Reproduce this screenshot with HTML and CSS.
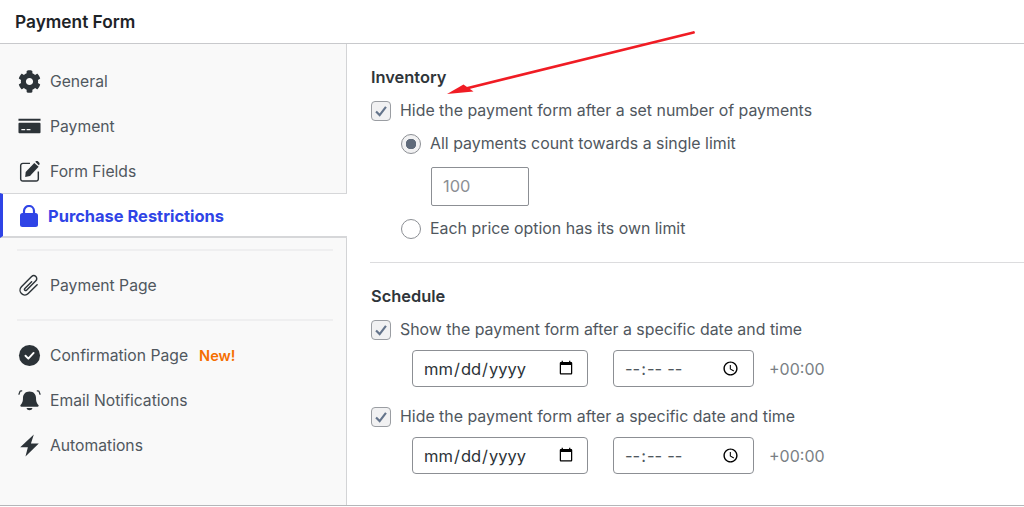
FILE: index.html
```html
<!DOCTYPE html>
<html lang="en">
<head>
<meta charset="utf-8">
<title>Payment Form</title>
<link rel="stylesheet" href="styles.css">
</head>
<body>
<header class="title">Payment Form</header>
<div class="panel">
  <nav class="side">
    <div class="group">
      <a class="item">
        <svg class="ico" viewBox="0 0 512 512"><path d="M487.4 315.7l-42.6-24.6c4.3-23.2 4.3-47 0-70.2l42.6-24.6c4.9-2.8 7.1-8.6 5.5-14-11.1-35.6-30-67.8-54.7-94.6-3.8-4.1-10-5.1-14.8-2.3L380.8 110c-17.9-15.4-38.5-27.3-60.8-35.1V25.8c0-5.6-3.9-10.5-9.4-11.7-36.7-8.2-74.3-7.8-109.2 0-5.5 1.2-9.4 6.1-9.4 11.7V75c-22.2 7.9-42.8 19.8-60.8 35.1L88.7 85.5c-4.9-2.8-11-1.9-14.8 2.3-24.7 26.7-43.6 58.9-54.7 94.6-1.7 5.4.6 11.2 5.5 14L67.3 221c-4.3 23.2-4.3 47 0 70.2l-42.6 24.6c-4.9 2.8-7.1 8.6-5.5 14 11.1 35.6 30 67.8 54.7 94.6 3.8 4.1 10 5.1 14.8 2.3l42.6-24.6c17.9 15.4 38.5 27.3 60.8 35.1v49.2c0 5.6 3.9 10.5 9.4 11.7 36.7 8.2 74.3 7.8 109.2 0 5.5-1.2 9.4-6.1 9.4-11.7v-49.2c22.2-7.9 42.8-19.8 60.8-35.1l42.6 24.6c4.9 2.8 11 1.9 14.8-2.3 24.7-26.7 43.6-58.9 54.7-94.6 1.5-5.5-.7-11.3-5.6-14.1zM256 336c-44.1 0-80-35.9-80-80s35.9-80 80-80 80 35.9 80 80-35.9 80-80 80z"/></svg>
        General
      </a>
      <a class="item">
        <svg class="ico" viewBox="0 0 24 24"><path d="M.5 4h23v2H.5zM1.500 8h21a1 1 0 0 1 1 1v9a1 1 0 0 1-1 1h-21a1 1 0 0 1-1-1V9a1 1 0 0 1 1-1zM3.500 14.500V16h4v-1.500zm5.500 0V16h4v-1.500z" fill-rule="evenodd"/></svg>
        Payment
      </a>
      <a class="item">
        <svg class="ico" viewBox="0 0 24 24"><path d="M12.500 3.500H5A2.200 2.200 0 0 0 2.800 5.700v14.100A2.200 2.200 0 0 0 5 22h14a2.200 2.200 0 0 0 2.200-2.200V12" fill="none" stroke="currentColor" stroke-width="1.500"/><path d="M8 12.500 17 3l4.500 4-9 9.700-5 1z"/><path d="m18 1.800 1-.8h1.500l2 2v1.500l-.8 1z"/></svg>
        Form Fields
      </a>
      <a class="item active">
        <svg class="ico" viewBox="0 0 18 22"><path d="M4 9V6a5 5 0 0 1 10 0v3" fill="none" stroke="currentColor" stroke-width="2.200"/><rect x="0" y="8" width="18" height="14" rx="2.500"/></svg>
        Purchase Restrictions
      </a>
    </div>
    <div class="group">
      <a class="item">
        <svg class="ico" viewBox="0 0 24 24"><path d="M16 6.500V17a4 4 0 0 1-8 0V5a2.500 2.500 0 0 1 5 0v11a1 1 0 0 1-2 0V8" fill="none" stroke="currentColor" stroke-width="1.200" stroke-linecap="round" transform="rotate(45 12 12) translate(12 12) scale(1.25) translate(-12 -11.500)"/></svg>
        Payment Page
      </a>
    </div>
    <div class="group">
      <a class="item">
        <svg class="ico" viewBox="0 0 24 24"><path d="M12 1a11 11 0 1 1 0 22 11 11 0 0 1 0-22z"/><path d="m7.800 12.300 3 3 5.500-6" fill="none" stroke="#fff" stroke-width="2" stroke-linecap="round" stroke-linejoin="round"/></svg>
        <span>Confirmation Page</span><span class="new">New!</span>
      </a>
      <a class="item">
        <svg class="ico" viewBox="0 0 24 24"><path d="M12 2.500c-4.400 0-6.800 3-6.800 7 0 4.400-1.300 5.900-2.500 7.300-.6.700-.2 1.700.8 1.700h17c1 0 1.400-1 .8-1.700-1.200-1.400-2.500-2.900-2.500-7.300 0-4-2.400-7-6.800-7zM8.800 19.800a3.300 3.300 0 0 0 6.400 0z"/><path d="M1 5.500 2.200 2.200 3.900 2M23 5.500l-1.200-3.300L20.100 2" fill="none" stroke="currentColor" stroke-width="1.300" stroke-linecap="round" stroke-linejoin="round"/></svg>
        Email Notifications
      </a>
      <a class="item">
        <svg class="ico" viewBox="0 0 24 24"><path d="M16.500 .5 2.300 13.700h8L7.800 23.500 21.700 9.800h-8.200z"/></svg>
        Automations
      </a>
    </div>
  </nav>
  <main class="main">
    <section class="sec first">
      <h2 class="head">Inventory</h2>
      <div class="row">
        <span class="check"><svg viewBox="0 0 20 20"><path d="m4.500 10.500 4 4 7-9" fill="none" stroke="#64748b" stroke-width="2.400"/></svg></span>
        Hide the payment form after a set number of payments
      </div>
      <div class="options">
        <div class="row"><span class="radio on"></span>All payments count towards a single limit</div>
        <div class="qty">100</div>
        <div class="row"><span class="radio"></span>Each price option has its own limit</div>
      </div>
    </section>
    <section class="sec">
      <h2 class="head">Schedule</h2>
      <div class="row">
        <span class="check"><svg viewBox="0 0 20 20"><path d="m4.500 10.500 4 4 7-9" fill="none" stroke="#64748b" stroke-width="2.400"/></svg></span>
        Show the payment form after a specific date and time
      </div>
      <div class="when">
        <input class="field date" type="date" aria-label="Show date">
        <input class="field time" type="time" aria-label="Show time">
        <span class="tz">+00:00</span>
      </div>
      <div class="row">
        <span class="check"><svg viewBox="0 0 20 20"><path d="m4.500 10.500 4 4 7-9" fill="none" stroke="#64748b" stroke-width="2.400"/></svg></span>
        Hide the payment form after a specific date and time
      </div>
      <div class="when">
        <input class="field date" type="date" aria-label="Hide date">
        <input class="field time" type="time" aria-label="Hide time">
        <span class="tz">+00:00</span>
      </div>
    </section>
  </main>
</div>
<svg class="arrow" viewBox="0 0 1024 507" width="1024" height="507" aria-hidden="true">
  <path d="M693.500 32.500 466 88.500" fill="none" stroke="#f01c24" stroke-width="2.800" stroke-linecap="round"/>
  <path d="M447 94 463.500 84.500 473.500 91.500z" fill="#f01c24"/>
</svg>
</body>
</html>
```
FILE: styles.css
```css
* { box-sizing: border-box; }
html, body { margin: 0; height: 507px; overflow: hidden; }
body {
  position: relative;
  background: #fff;
  color: #50575e;
  font-family: Inter, "Liberation Sans", sans-serif;
  font-size: 15.9px;
}
.title {
  height: 44px;
  padding: 13px 0 0 15px;
  border-bottom: 1px solid #c8c9cc;
  color: #1d2327;
  font-size: 17.3px;
  font-weight: 600;
  line-height: 18px;
}
.panel {
  display: flex;
  height: 462px;
  border-bottom: 1px solid #b5b6b9;
}
.side {
  flex: none;
  width: 347px;
  padding-top: 15px;
  background: #f9f9f9;
  border-right: 1px solid #d3d4d6;
}
.group + .group {
  margin: 11px 13px 0 17px;
  padding-top: 12px;
  border-top: 2px solid #efeff0;
}
.group + .group .item { margin: 0 -13px 0 -17px; }
.item {
  display: flex;
  align-items: center;
  height: 45px;
  padding-left: 18px;
  font-size: 15.7px;
  line-height: 18px;
}
.ico {
  flex: none;
  width: 23px;
  height: 23px;
  margin-right: 9px;
  color: #2c3338;
  fill: currentColor;
}
.active {
  height: 45px;
  margin: -1px -1px 0 0;
  padding: 1px 0 0 17px;
  background: #fff;
  border-left: 3px solid #2f44e6;
  border-top: 1px solid #d6d7d9;
  border-bottom: 2px solid #d6d7d9;
  color: #2f44e6;
  font-size: 16.45px;
  font-weight: 700;
  position: relative;
}
.active .ico {
  color: #2f44e6;
  width: 18px;
  height: 22px;
  margin: 0 10px 0 0;
}
.new {
  margin-left: 11px;
  color: #f56e00;
  font-size: 14.6px;
  font-weight: 600;
}
.main {
  flex: 1;
  padding-left: 23px;
}
.sec { padding: 0 0 0 1px; }
.first {
  padding-top: 24px;
  padding-bottom: 22px;
  border-bottom: 1px solid #dcdcde;
}
.sec + .sec { padding-top: 24px; }
.head {
  margin: 0 0 14px;
  color: #2f353a;
  font-size: 16.4px;
  font-weight: 600;
  line-height: 18px;
}
.row {
  display: flex;
  align-items: center;
  height: 22px;
  line-height: 20px;
}
.check {
  flex: none;
  width: 20px;
  height: 20px;
  margin-right: 9px;
  background: #f1f1f2;
  border: 1px solid #9a9da2;
  border-radius: 4px;
}
.check svg { display: block; width: 18px; height: 18px; }
.options { padding: 11px 0 0 30px; }
.radio {
  flex: none;
  width: 20px;
  height: 20px;
  margin-right: 9px;
  background: #fff;
  border: 1px solid #8c8f94;
  border-radius: 50%;
}
.radio.on {
  background: radial-gradient(circle, #5f6a7a 0 5px, #f1f1f2 5.500px);
}
.qty {
  width: 98px;
  height: 39px;
  margin: 12px 0 12px 30px;
  padding: 0 11px;
  border: 1px solid #8c8f94;
  border-radius: 2px;
  color: #8c8f94;
  font-size: 16.400px;
  line-height: 37px;
}
.when {
  display: flex;
  align-items: center;
  gap: 25px;
  height: 37px;
  margin: 9px 0 19px 41px;
}
.when:last-child { margin-bottom: 0; }
.field {
  height: 37px;
  padding: 0 11px 0 10px;
  background: #fff;
  border: 1px solid #8c8f94;
  border-radius: 4px;
  color: #2c3338;
  font-family: Inter, "Liberation Sans", sans-serif;
  font-size: 16.5px;
}
.date { width: 176px; }
.time { width: 141px; color: #50575e; }
.tz { margin-left: -10px; color: #7a7f85; font-size: 16px; }
.arrow {
  position: absolute;
  top: 0;
  left: 0;
  pointer-events: none;
}
```
